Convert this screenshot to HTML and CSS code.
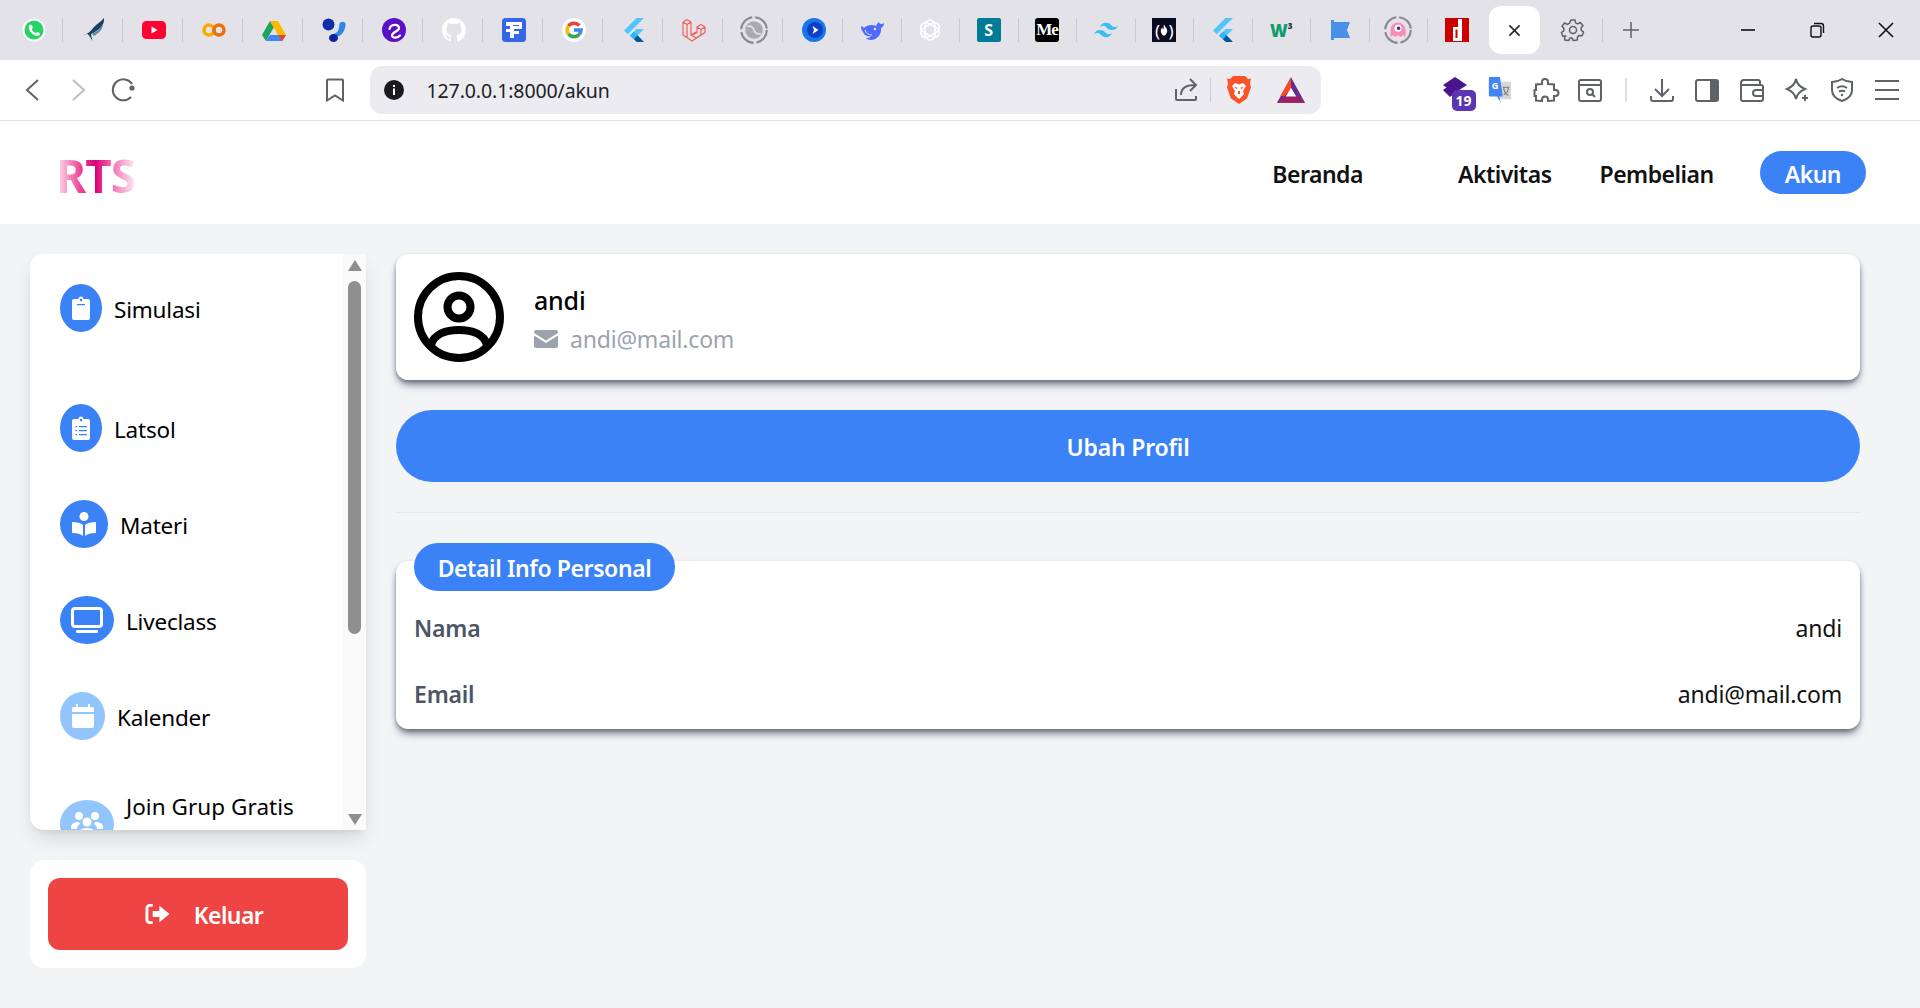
FILE: index.html
```html
<!DOCTYPE html>
<html lang="id">
<head>
<meta charset="utf-8">
<title>Akun</title>
<link rel="stylesheet" href="styles.css">
</head>
<body>
<svg class="defs" aria-hidden="true">
  <symbol id="flutter" viewBox="0 0 24 24"><path fill="#54c5f8" d="M14.5 0 2 12.5l3.8 3.8L22 0z"/><path fill="#54c5f8" d="M14.5 11 8 17.500l3.800 3.800L22 11z"/><path fill="#01579b" d="m11.800 21.300 3 2.700H22l-7.200-7.500z"/><path fill="#29b6f6" d="m8 17.500 3.800-3.800 3.800 3.800-3.800 3.800z"/></symbol>
  <symbol id="ring" viewBox="0 0 24 24"><circle cx="12" cy="12" r="11" fill="none" stroke="#8a8a8e" stroke-width="1.800" stroke-dasharray="15 2.500"/></symbol>
</svg>

<div class="tabstrip">
  <div class="tab"><svg class="fav" viewBox="0 0 24 24"><circle cx="12" cy="12" r="11.500" fill="#fff"/><circle cx="12" cy="12" r="9.500" fill="#25d366"/><path fill="#fff" d="M8.500 6.500c-.7 0-1.800 1.100-1.800 2.800 0 3.800 4.800 8.600 8.600 8.600 1.600 0 2.800-1.100 2.800-2 0-.6-2.300-2-2.900-2-.5 0-1 1.100-1.500 1.100-1.100 0-3.900-2.600-3.900-3.900 0-.5 1.100-.9 1.100-1.500 0-.6-1.300-3.100-2.400-3.100z"/></svg></div>
  <div class="tab"><svg class="fav" viewBox="0 0 24 24"><path fill="#1f3f5f" d="M1 17c5-1 8-4 11-8 3-3.500 7-5 10-9 .5 5-2 9-6 12-3 2-5 3-7 4l.5 3 1 4-3-5-2-2z"/><path fill="#5f86a8" d="M10 16c4-2 9-5 11-10 0 5-4 9-9 12z"/></svg></div>
  <div class="tab"><svg class="fav" viewBox="0 0 24 24"><rect y="3" width="24" height="18" rx="4.500" fill="#ff0033"/><path fill="#fff" d="m9.500 8.500 6 3.500-6 3.500z"/></svg></div>
  <div class="tab"><svg class="fav" viewBox="0 0 24 24"><circle cx="7" cy="12" r="5" fill="none" stroke="#f9ab00" stroke-width="3.500"/><circle cx="17" cy="12" r="5" fill="none" stroke="#e8710a" stroke-width="3.500"/></svg></div>
  <div class="tab"><svg class="fav" viewBox="0 0 24 24"><path fill="#1ea362" d="M8 3 0 17l4 6 8-14z"/><path fill="#ffba00" d="M8 3h8l8 14h-8z"/><path fill="#4285f4" d="M4 23h16l4-6H8z"/><path fill="#ea4335" d="m24 17-4 6-4-6z"/></svg></div>
  <div class="tab"><svg class="fav" viewBox="0 0 24 24"><circle cx="6.500" cy="6.500" r="6" fill="#0f2ea8"/><path fill="#2f86e8" d="M23.500 6c0 6-3 10-6.500 12-2 1-5 0-7-2 4 0 7-2 7.500-10 .2-3 6-3 6 0z"/><ellipse cx="11.500" cy="20" rx="4.500" ry="4" fill="#0d22a0"/></svg></div>
  <div class="tab"><svg class="fav" viewBox="0 0 24 24"><circle cx="12" cy="12" r="12" fill="#5a0fc8"/><path fill="none" stroke="#fff" stroke-width="2.200" stroke-linecap="round" d="M7.500 11c1-5 9-5.500 9.500-1 .3 3-7 4-7 7.500 0 3 6 2.500 8 0"/></svg></div>
  <div class="tab"><svg class="fav" viewBox="0 0 16 16"><path fill="#fff" d="M8 0C3.580 0 0 3.580 0 8c0 3.540 2.290 6.530 5.470 7.590.4.070.55-.17.55-.38 0-.19-.01-.82-.01-1.490-2.010.37-2.530-.49-2.690-.94-.09-.23-.48-.94-.82-1.130-.28-.15-.68-.52-.01-.53.63-.01 1.080.58 1.230.82.720 1.210 1.870.87 2.330.66.070-.52.280-.87.510-1.070-1.780-.2-3.640-.89-3.640-3.950 0-.87.310-1.590.820-2.150-.08-.2-.36-1.020.080-2.120 0 0 .67-.21 2.200.82.640-.18 1.320-.27 2-.27.680 0 1.360.09 2 .27 1.530-1.040 2.200-.82 2.200-.82.440 1.100.160 1.920.080 2.120.510.56.820 1.270.820 2.150 0 3.070-1.870 3.750-3.650 3.950.29.25.54.73.54 1.480 0 1.070-.01 1.930-.01 2.200 0 .21.150.46.550.38A8.013 8.013 0 0 0 16 8c0-4.420-3.580-8-8-8z"/></svg></div>
  <div class="tab"><svg class="fav" viewBox="0 0 24 24"><rect width="24" height="24" rx="3.500" fill="#3367e8"/><path fill="#fff" d="M4 4h16v7h-8v2h5v3h-5v4H8v-6H4v-3h4V8H4z"/><path fill="#3367e8" d="M11 7h6v1h-6z"/></svg></div>
  <div class="tab"><svg class="fav" viewBox="0 0 24 24"><circle cx="12" cy="12" r="12" fill="#fff"/><g fill="none" stroke-width="3.600"><path stroke="#ea4335" d="M17.300 7.500A7 7 0 0 0 6.500 8"/><path stroke="#fbbc05" d="M6.500 8a7 7 0 0 0 0 8"/><path stroke="#34a853" d="M6.500 16a7 7 0 0 0 11 0"/><path stroke="#4285f4" d="M17.500 16A7 7 0 0 0 19 12h-7"/></g></svg></div>
  <div class="tab"><svg class="fav"><use href="#flutter"/></svg></div>
  <div class="tab"><svg class="fav" viewBox="0 0 24 24"><path fill="none" stroke="#f0625d" stroke-width="1.200" stroke-linejoin="round" d="m1 4 4-2.500L9 4v13l5 3 9-5.500V9l-4-2.500L15 9v5.500L10 17.500M1 4v13l9 6 13-8.500M1 4l4 2.500L9 4M5 6.500V19M15 9l4 2.500L23 9M19 11.500v5.500M9 17l5-3"/></svg></div>
  <div class="tab"><svg class="fav ss" viewBox="0 0 24 24"><use href="#ring"/><circle cx="12" cy="12" r="7.500" fill="#a8aaae"/><path fill="none" stroke="#e2e2e8" stroke-width="1.500" d="M6 9c3-1 5 0 6 3s3 4 6 3"/></svg></div>
  <div class="tab"><svg class="fav" viewBox="0 0 24 24"><circle cx="12" cy="12" r="12" fill="#1677f0"/><circle cx="13" cy="12" r="8" fill="#0c3fc4"/><path fill="#fff" d="m10.500 8 6 4-6 4 1.500-4z"/></svg></div>
  <div class="tab narrow"><svg class="fav" viewBox="0 0 24 24"><path fill="#4d6bfe" d="M1 8c1 0 2 1 3 2 3-3 8-4 12-2 1-1 1-3 3-4 0 1 1 2 2 2s2 0 3-1c0 2-1 4-3 5 1 6-4 12-10 12-2 0-4-1-5-2 2 0 4 0 5-2-4 1-7-1-8-4-2-2-2-5-2-6z"/><circle cx="15" cy="11" r="1.300" fill="#e2e2e8"/><path fill="none" stroke="#e2e2e8" stroke-width="1" d="M5 12c1 3 3 5 7 5"/></svg></div>
  <div class="tab narrow"><svg class="fav" viewBox="0 0 24 24"><g fill="none" stroke="#fff" stroke-width="1.600"><rect x="7" y="2" width="10" height="20" rx="5"/><rect x="7" y="2" width="10" height="20" rx="5" transform="rotate(60 12 12)"/><rect x="7" y="2" width="10" height="20" rx="5" transform="rotate(120 12 12)"/></g></svg></div>
  <div class="tab narrow"><div class="lettericon teal">S</div></div>
  <div class="tab narrow"><div class="lettericon black">Me</div></div>
  <div class="tab narrow"><svg class="fav" viewBox="0 0 24 24"><path fill="#38bdf8" d="M12 4.800c-3.200 0-5.200 1.600-6 4.800 1.200-1.600 2.600-2.200 4.200-1.800.913.228 1.565.89 2.288 1.624C13.666 10.618 15.027 12 18 12c3.200 0 5.200-1.600 6-4.800-1.200 1.600-2.600 2.200-4.200 1.800-.913-.228-1.565-.89-2.288-1.624C16.337 6.182 14.976 4.800 12 4.800zM6 12c-3.200 0-5.200 1.600-6 4.800 1.200-1.600 2.600-2.200 4.200-1.800.913.228 1.565.89 2.288 1.624C7.666 17.818 9.027 19.200 12 19.200c3.200 0 5.200-1.600 6-4.800-1.200 1.600-2.600 2.200-4.200 1.800-.913-.228-1.565-.89-2.288-1.624C10.337 13.382 8.976 12 6 12z"/></svg></div>
  <div class="tab narrow"><div class="lettericon fcc">( )<svg class="flame" viewBox="0 0 10 14"><path fill="#fff" d="M5 0c1 3 4 4 4 8 0 3-2 6-4 6S1 11 1 8c0-2 1-3 2-4 0 2 1 2 1.500 2C5 4 4 2 5 0z"/></svg></div></div>
  <div class="tab narrow"><svg class="fav"><use href="#flutter"/></svg></div>
  <div class="tab narrow"><div class="lettericon w3">W<sup>3</sup></div></div>
  <div class="tab narrow"><svg class="fav" viewBox="0 0 24 24"><path fill="#4a8fe8" d="M3 2h3v2h16l-3 8 3 8H6v2H3z"/></svg></div>
  <div class="tab narrow"><svg class="fav ss" viewBox="0 0 24 24"><use href="#ring"/><path fill="#f78fb3" d="M5.500 12a6.500 6.500 0 0 1 13 0v6l-2-1.500-2.200 1.500-2.300-1.500-2.300 1.500L7.500 16.500l-2 1.500z"/><circle cx="12" cy="10.500" r="3" fill="#fff"/><circle cx="12.500" cy="10.500" r="1.500" fill="#3b2f8f"/></svg></div>
  <div class="tab narrow last"><svg class="fav" viewBox="0 0 24 24"><rect width="24" height="24" fill="#cc0000"/><path fill="#fff" d="M13 1h4v22H8V9h5zM10.500 11.500V20h2v-8.500z"/></svg></div>
  <div class="activetab"><svg class="tabclose" viewBox="0 0 14 14"><path fill="none" stroke="#222" stroke-width="1.600" d="m1.500 1.500 11 11m0-11-11 11"/></svg></div>
  <div class="tab narrow gear"><svg class="fav" viewBox="0 0 24 24"><g fill="none" stroke="#5f6068" stroke-width="1.500" stroke-linejoin="round"><path d="M10 1.500h4l.6 3 2.100 1 2.700-1.400 2.600 3.300-2 2.100.3 2.400 2.300 1.700-1.500 3.800-3-.4-1.700 1.700-.1 3-4 .5-1.300-2.700h-2l-1.300 2.700-4-.5-.1-3L4.900 17.500l-3 .4L.4 14.100l2.300-1.700.3-2.400-2-2.100 2.600-3.300 2.700 1.400 2.100-1z" transform="translate(0 .4)"/><circle cx="12" cy="12" r="3.500"/></g></svg></div>
  <div class="newtab"><svg class="newplus" viewBox="0 0 16 16"><path fill="none" stroke="#5f6068" stroke-width="1.500" d="M8 0v16M0 8h16"/></svg></div>
  <div class="winctrls">
    <div class="winbtn"><svg class="winicon" viewBox="0 0 16 16"><path fill="none" stroke="#111" stroke-width="1.600" d="M1 8h14"/></svg></div>
    <div class="winbtn"><svg class="winicon" viewBox="0 0 16 16"><g fill="none" stroke="#111" stroke-width="1.400"><rect x="2" y="4" width="10" height="11" rx="2"/><path d="M5 1.500h7c1.500 0 2.500 1 2.500 2.500v7"/></g></svg></div>
    <div class="winbtn"><svg class="winicon" viewBox="0 0 16 16"><path fill="none" stroke="#111" stroke-width="1.600" d="m1 1 14 14m0-14L1 15"/></svg></div>
  </div>
</div>

<div class="toolbar">
  <div class="tbtn"><svg class="ticon" viewBox="0 0 24 24"><path class="st" d="M17 2 6 12l11 10"/></svg></div>
  <div class="tbtn"><svg class="ticon" viewBox="0 0 24 24"><path class="st faint" d="m7 2 11 10L7 22"/></svg></div>
  <div class="tbtn"><svg class="ticon" viewBox="0 0 24 24"><path class="st" d="M20 19a10.500 10.500 0 1 1 1-13"/><circle cx="21" cy="10" r="2.600" fill="#5f6368"/></svg></div>
  <div class="tbtn bookmark"><svg class="ticon" viewBox="0 0 24 24"><path class="st" d="M5 1.500h14a1 1 0 0 1 1 1v20l-8-5-8 5v-20a1 1 0 0 1 1-1z"/></svg></div>
  <div class="urlbar">
    <svg class="infoicon" viewBox="0 0 20 20"><circle cx="10" cy="10" r="10" fill="#1b1b1f"/><path fill="#fff" d="M9 5h2v2H9zM9 8.500h2V15H9z"/></svg>
    <span class="urltext">127.0.0.1:8000/akun</span>
    <svg class="ticon share" viewBox="0 0 24 24"><path class="st" d="M2 11v10a1 1 0 0 0 1 1h18a1 1 0 0 0 1-1v-3M7 17c0-7 5-10 14-10M16 1l6 6-6 6"/></svg>
    <span class="urlsep"></span>
    <svg class="brave" viewBox="0 0 24 28"><path fill="#fb542b" d="M6 0h12l3 3 3-.5-1 5 1 4-4 11-8 5.500-8-5.500-4-11 1-4-1-5L3 3z"/><path fill="#fff" d="M5 10l3-3 4 1.500L16 7l3 3-3 5 1 3-5 5-5-5 1-3z"/><path fill="#fb542b" d="M7.500 10.500 11 12l-2 1zM16.500 10.500 13 12l2 1zM11 15h2v3h-2z"/></svg>
    <svg class="bat" viewBox="0 0 24 24"><path fill="#662d91" d="M12 1 24 23H0z"/><path fill="#ff4724" d="M12 1v10l-6 6.500 L3 17z"/><path fill="#9e1f63" d="M0 23l6-5.500h12l6 5.500z"/><path fill="#fff" d="m12 10 4.500 7.500h-9z"/></svg>
  </div>
  <div class="tbtn"><svg class="cap" viewBox="0 0 24 22"><path fill="#4a148c" d="M12 0 0 8l3.500 2.500L0 13l7 7 6-5 11-7z"/></svg><span class="badge">19</span></div>
  <div class="tbtn"><svg class="ticon tr" viewBox="0 0 24 28"><path fill="#d8d8d8" d="M10 5h13a1 1 0 0 1 1 1v17a1 1 0 0 1-1 1H9z"/><path fill="#4285f4" d="M1 0h11l3 21h-4l2 7-4-7H1a1 1 0 0 1-1-1V1a1 1 0 0 1 1-1z"/><text x="3" y="13" class="trg">G</text><path fill="none" stroke="#777" stroke-width="1.200" d="M15 11h7m-6 8c3-1 5-4 5-8m-5 0c0 4 2 7 5 9"/></svg></div>
  <div class="tbtn"><svg class="ticon" viewBox="0 0 24 24"><path class="st" d="M9 6V4a3 3 0 0 1 6 0v2l6 .5V12h1.500a3 3 0 0 1 0 6H21v4.500L15 23v-1.500a3 3 0 0 0-6 0V23l-6-.5V18H1.500v-6H3V6.500z"/></svg></div>
  <div class="tbtn"><svg class="ticon" viewBox="0 0 24 24"><rect class="st" x="1" y="2" width="22" height="21" rx="2"/><path class="st" d="M1 7h22"/><circle class="st" cx="12" cy="14" r="3"/><path class="st" d="m14 16 3 3"/></svg></div>
  <span class="toolsep"></span>
  <div class="tbtn"><svg class="ticon" viewBox="0 0 24 24"><path class="st" d="M12 1v16M5 11l7 7 7-7M1 18v3a2 2 0 0 0 2 2h18a2 2 0 0 0 2-2v-3"/></svg></div>
  <div class="tbtn"><svg class="ticon" viewBox="0 0 24 24"><rect class="st" x="1" y="2" width="22" height="21" rx="2"/><path fill="#5f6368" d="M15 2h7a1 1 0 0 1 1 1v19a1 1 0 0 1-1 1h-7z"/></svg></div>
  <div class="tbtn"><svg class="ticon" viewBox="0 0 24 24"><path class="st" d="M2 7h19a2 2 0 0 1 2 2v12a2 2 0 0 1-2 2H3a2 2 0 0 1-2-2V5a3 3 0 0 1 3-3h14a2 2 0 0 1 2 2v3M23 12h-7a3 3 0 0 0 0 6h7"/></svg></div>
  <div class="tbtn"><svg class="ticon" viewBox="0 0 24 24"><path class="st" d="M11 1c1 5 4 8 9 10-5 2-8 5-9 10-1-5-4-8-9-10 5-2 8-5 9-10z"/><path class="st" d="M20 17v6M17 20h6"/></svg></div>
  <div class="tbtn"><svg class="ticon" viewBox="0 0 24 24"><path class="st" d="M12 1c3 2 6 3 10 3v8c0 6-4 9-10 11C6 21 2 18 2 12V4c4 0 7-1 10-3z"/><path class="st" d="M7 10c3-2 7-2 10 0M9 13.500c2-1 4-1 6 0"/><circle cx="12" cy="17" r="1.200" fill="#5f6368"/></svg></div>
  <div class="tbtn"><svg class="ticon" viewBox="0 0 24 24"><path class="st" d="M0 3h24M0 12h24M0 21h24"/></svg></div>
</div>

<header class="nav">
  <div class="logo">RTS</div>
  <nav class="menu">
    <a class="menuitem beranda">Beranda</a>
    <a class="menuitem">Aktivitas</a>
    <a class="menuitem">Pembelian</a>
    <a class="menuitem current">Akun</a>
  </nav>
</header>

<div class="layout">
  <aside class="side">
    <div class="sidecard">
      <div class="sidelist">
        <div class="row first">
          <span class="bubble w42"><svg class="glyph" viewBox="0 0 18 24"><path fill="#fff" d="M2 3h4.500a2.500 2.500 0 0 1 5 0H16a2 2 0 0 1 2 2v17a2 2 0 0 1-2 2H2a2 2 0 0 1-2-2V5a2 2 0 0 1 2-2z"/><circle cx="9" cy="4" r="1.300" fill="#3b82f6"/><path fill="#3b82f6" d="M5 8h8v1.300H5z"/></svg></span>
          <span class="label">Simulasi</span>
        </div>
        <div class="row">
          <span class="bubble w42"><svg class="glyph" viewBox="0 0 18 24"><path fill="#fff" d="M2 3h4.500a2.500 2.500 0 0 1 5 0H16a2 2 0 0 1 2 2v17a2 2 0 0 1-2 2H2a2 2 0 0 1-2-2V5a2 2 0 0 1 2-2z"/><circle cx="9" cy="4" r="1.300" fill="#3b82f6"/><path fill="#3b82f6" d="M7 10h8v1.300H7zM7 14h8v1.300H7zM7 18h8v1.300H7zM3.500 10h1.500v1.300H3.500zM3.500 14h1.500v1.300H3.500zM3.500 18h1.500v1.300H3.500z"/></svg></span>
          <span class="label">Latsol</span>
        </div>
        <div class="row">
          <span class="bubble w48"><svg class="glyph" viewBox="0 0 24 24"><circle cx="12" cy="4.500" r="4.500" fill="#fff"/><path fill="#fff" d="M0 10c5 0 9 1 11 3v11c-2-2-6-3-11-3zM24 10c-5 0-9 1-11 3v11c2-2 6-3 11-3z"/></svg></span>
          <span class="label">Materi</span>
        </div>
        <div class="row">
          <span class="bubble w54"><svg class="glyph wide" viewBox="0 0 32 26"><rect x="1.500" y="1.500" width="29" height="18" rx="2.500" fill="none" stroke="#fff" stroke-width="3"/><rect x="5" y="23" width="22" height="3" rx="1" fill="#fff"/></svg></span>
          <span class="label">Liveclass</span>
        </div>
        <div class="row kal">
          <span class="bubble w45 light"><svg class="glyph cal" viewBox="0 0 22 24"><path fill="#fff" d="M4 0h2v3h10V0h2v3h2a2 2 0 0 1 2 2v3H0V5a2 2 0 0 1 2-2h2zM0 10h22v12a2 2 0 0 1-2 2H2a2 2 0 0 1-2-2z"/></svg></span>
          <span class="label">Kalender</span>
        </div>
        <div class="row join">
          <span class="bubble w54 light"><svg class="glyph wide" viewBox="0 0 32 26"><circle cx="8" cy="5" r="4" fill="#fff"/><circle cx="24" cy="5" r="4" fill="#fff"/><circle cx="16" cy="11" r="4.500" fill="#fff"/><path fill="#fff" d="M0 16c0-3 3-5 8-5l1 2c-2 1-3 3-3 5H0zM32 16c0-3-3-5-8-5l-1 2c2 1 3 3 3 5h6zM8 22c0-3 3-5 8-5s8 2 8 5v4H8z"/></svg></span>
          <span class="label joinlabel">Join Grup Gratis</span>
        </div>
      </div>
      <div class="scrollbar">
        <span class="arrow up"></span>
        <span class="thumb"></span>
        <span class="arrow down"></span>
      </div>
    </div>
    <div class="logoutcard">
      <button class="logout">
        <svg class="logouticon" viewBox="0 0 26 22"><path fill="none" stroke="#fff" stroke-width="3" d="M8 2H5a3 3 0 0 0-3 3v12a3 3 0 0 0 3 3h3"/><path fill="#fff" d="M8 8h7V2.500L25.500 11 15 19.500V14H8z"/></svg>
        <span>Keluar</span>
      </button>
    </div>
  </aside>

  <main class="content">
    <section class="card profile">
      <svg class="avatar" viewBox="0 0 90 90"><g fill="none" stroke="#000" stroke-width="8"><circle cx="45" cy="45" r="41"/><circle cx="45" cy="35" r="11.500"/><path d="M17 73c3-11 15-15 28-15s25 4 28 15"/></g></svg>
      <div class="who">
        <div class="name">andi</div>
        <div class="mail">
          <svg class="mailicon" viewBox="0 0 24 18"><path fill="#9ca3af" d="M2 0h20a2 2 0 0 1 2 2v1L12 10.500 0 3V2a2 2 0 0 1 2-2zM0 5.500l12 7.500 12-7.500V16a2 2 0 0 1-2 2H2a2 2 0 0 1-2-2z"/></svg>
          <span>andi@mail.com</span>
        </div>
      </div>
    </section>
    <button class="editbtn">Ubah Profil</button>
    <hr class="divider">
    <section class="card detail">
      <div class="pill">Detail Info Personal</div>
      <div class="inforow"><span class="key">Nama</span><span class="val">andi</span></div>
      <div class="inforow"><span class="key">Email</span><span class="val">andi@mail.com</span></div>
    </section>
  </main>
</div>
</body>
</html>
```

FILE: styles.css
```css
* { box-sizing: border-box; }
html, body { margin: 0; height: 1008px; overflow: hidden; }
body { background: #f3f4f6; font-family: "Noto Sans", "Open Sans", sans-serif; color: #000; }
.defs { width: 0; height: 0; display: block; }

/* browser chrome */
.tabstrip { height: 60px; background: #e2e2e8; display: flex; align-items: center; padding-left: 3px; }
.tab { width: 60px; height: 24px; padding-left: 3px; border-right: 1px solid #c9c9cf; display: flex; align-items: center; justify-content: center; flex: none; }
.tab.narrow { width: 58.500px; padding-left: 0; }
.tab.last { border-right: 0; }
.tab.gear { margin-left: 4px; }
.fav { width: 24px; height: 24px; display: block; overflow: visible; }
.fav.ss { width: 28px; height: 28px; }
.lettericon { width: 24px; height: 24px; border-radius: 2px; display: flex; align-items: center; justify-content: center; overflow: hidden; position: relative; }
.teal { background: #017c97; color: #fff; font: 700 16px "Open Sans", sans-serif; }
.black { background: #000; color: #fff; font: 700 17px "Liberation Serif", serif; border-radius: 3px; justify-content: flex-start; padding-left: 1px; letter-spacing: -1px; }
.fcc { background: #0a0a23; color: #fff; font: 400 17px "Noto Sans", sans-serif; border-radius: 0; white-space: pre; word-spacing: 4px; }
.flame { width: 8px; height: 12px; position: absolute; left: 8px; top: 6px; }
.w3 { color: #0f9d6e; font: 800 17px "Open Sans", sans-serif; overflow: visible; }
.w3 sup { font-size: 8px; color: #333; margin-top: -9px; line-height: 1; }
.activetab { width: 51px; height: 48px; background: #fff; border-radius: 12px; margin-left: 2.500px; display: flex; align-items: center; justify-content: center; flex: none; }
.tabclose { width: 13px; height: 13px; }
.newtab { width: 56px; display: flex; justify-content: center; flex: none; }
.newplus { width: 16px; height: 16px; }
.winctrls { margin-left: auto; display: flex; }
.winbtn { width: 69px; height: 48px; display: flex; align-items: center; justify-content: center; }
.winicon { width: 16px; height: 16px; }

.toolbar { height: 61px; background: #fff; border-bottom: 1px solid #e4e4e4; display: flex; align-items: center; padding: 0 10px 0 10.500px; }
.tbtn { width: 45px; height: 45px; display: flex; align-items: center; justify-content: center; flex: none; position: relative; }
.ticon { width: 24px; height: 24px; overflow: visible; }
.st { fill: none; stroke: #5f6368; stroke-width: 2; }
.st.faint { stroke: #bdbdbd; }
.bookmark { margin-left: 167px; }
.urlbar { width: 951px; height: 48px; margin: 0 112px 0 12px; background: #ecebf0; border-radius: 12px; display: flex; align-items: center; padding-left: 14px; flex: none; }
.infoicon { width: 20px; height: 20px; flex: none; }
.urltext { font-size: 19.500px; color: #202124; margin-left: 23px; letter-spacing: -.1px; }
.share { margin-left: auto; }
.urlsep { width: 1px; height: 24px; background: #ccc; margin: 0 16px 0 12px; }
.brave { width: 24px; height: 28px; }
.bat { width: 28px; height: 28px; margin: 0 16px 0 26px; }
.cap { width: 24px; height: 22px; margin-top: -4px; }
.badge { position: absolute; left: 19px; top: 22px; width: 24px; height: 21px; border-radius: 5px; background: #5e35b1; color: #fff; font: 700 14px "Noto Sans", sans-serif; display: flex; align-items: center; justify-content: center; }
.tr { height: 26px; }
.trg { font: 700 10px "Noto Sans", sans-serif; fill: #fff; }
.toolsep { width: 2px; height: 24px; background: #dfdfe3; margin: 0 13px 0 12px; flex: none; }

/* site nav */
.nav { height: 103px; background: #fff; display: flex; align-items: center; justify-content: space-between; padding: 4px 54px 0 56px; }
.logo { font-size: 46px; font-weight: 700; line-height: 1; letter-spacing: -1px; background: linear-gradient(90deg, #fde7f3, #ec4899 30%, #db0077 50%, #f472b6 72%, #fdeaf5); -webkit-background-clip: text; background-clip: text; color: transparent; }
.menu { display: flex; align-items: center; margin-top: -4px; }
.menuitem { font-size: 23px; font-weight: 600; height: 43px; line-height: 46px; padding: 0 24px; color: #111; border-radius: 22px; letter-spacing: -.5px; }
.beranda { margin-right: 47px; }
.current { background: #3b82f6; color: #fff; margin-left: 22px; padding: 0 25px; }

/* page */
.layout { display: grid; grid-template-columns: 336px 1464px; column-gap: 30px; padding: 30px 0 0 30px; }
.side { display: flex; flex-direction: column; gap: 30px; }
.sidecard { height: 576px; display: flex; background: #fff; border-radius: 14px 0 0 14px; box-shadow: 0 10px 20px -3px rgba(0,0,0,.13), 0 4px 6px -4px rgba(0,0,0,.1); overflow: hidden; }
.sidelist { flex: 1; padding: 30px 0 0 30px; overflow: hidden; min-width: 0; }
.row { display: flex; align-items: center; height: 48px; margin-bottom: 48px; }
.row.first { margin-bottom: 72px; }
.row.kal { margin-bottom: 60px; }
.bubble { height: 48px; border-radius: 50%; background: #3b82f6; display: flex; align-items: center; justify-content: center; flex: none; margin-right: 12px; }
.w42 { width: 42px; }
.w45 { width: 45px; }
.w48 { width: 48px; }
.w54 { width: 54px; }
.light { background: #93c5fd; }
.glyph { width: 18px; height: 24px; }
.w48 .glyph { width: 24px; }
.glyph.wide { width: 32px; height: 26px; }
.glyph.cal { width: 22px; }
.label { font-size: 22.500px; color: #000; letter-spacing: -.2px; margin-top: 3px; }
.joinlabel { margin-top: -35px; letter-spacing: .05px; }
.scrollbar { width: 23px; background: #fafafa; display: flex; flex-direction: column; align-items: center; flex: none; padding-top: 6px; }
.arrow { width: 0; height: 0; border-left: 7.500px solid transparent; border-right: 7.500px solid transparent; display: block; flex: none; }
.arrow.up { border-bottom: 11px solid #8f8f8f; }
.arrow.down { border-top: 11px solid #8f8f8f; margin-top: 180px; }
.thumb { width: 13px; height: 353px; margin-top: 10px; background: #8f8f8f; border-radius: 7px; flex: none; }
.logoutcard { height: 108px; background: #fff; border-radius: 14px; padding: 18px; }
.logout { width: 100%; height: 72px; background: #ef4444; border: 0; border-radius: 12px; color: #fff; font: 600 23px "Noto Sans", sans-serif; letter-spacing: -.6px; display: flex; align-items: center; justify-content: center; gap: 24px; padding: 2px 0 0 12px; }
.logouticon { width: 25px; height: 22px; margin-top: -3px; }

.content { display: flex; flex-direction: column; }
.card { background: #fff; border-radius: 12px; box-shadow: 0 6px 9px -2px #6b7280, 0 2px 4px -1px #6b7280; }
.profile { height: 126px; display: flex; align-items: center; padding-left: 18px; }
.avatar { width: 90px; height: 90px; flex: none; }
.who { margin-left: 30px; padding-top: 8px; }
.name { font-size: 25px; font-weight: 500; line-height: 36px; letter-spacing: -.2px; }
.mail { display: flex; align-items: center; gap: 12px; color: #9ca3af; font-size: 23px; line-height: 42px; letter-spacing: -.2px; }
.mailicon { width: 24px; height: 18px; }
.editbtn { height: 72px; margin-top: 30px; border: 0; border-radius: 36px; background: #3b82f6; color: #fff; font: 600 23px "Noto Sans", sans-serif; letter-spacing: -.2px; padding-top: 2px; }
.divider { width: 100%; height: 1px; margin: 30px 0 48px; border: 0; background: #e5e7eb; }
.detail { height: 168px; position: relative; padding: 34px 18px 0; }
.pill { position: absolute; left: 18px; top: -18px; width: 261px; height: 48px; line-height: 51px; text-align: center; border-radius: 24px; background: #3b82f6; color: #fff; font-size: 23px; font-weight: 600; letter-spacing: -.4px; white-space: nowrap; }
.inforow { display: flex; justify-content: space-between; align-items: center; height: 66px; font-size: 23px; letter-spacing: -.2px; }
.key { color: #4b5563; font-weight: 600; }
.val { color: #111; }
```
